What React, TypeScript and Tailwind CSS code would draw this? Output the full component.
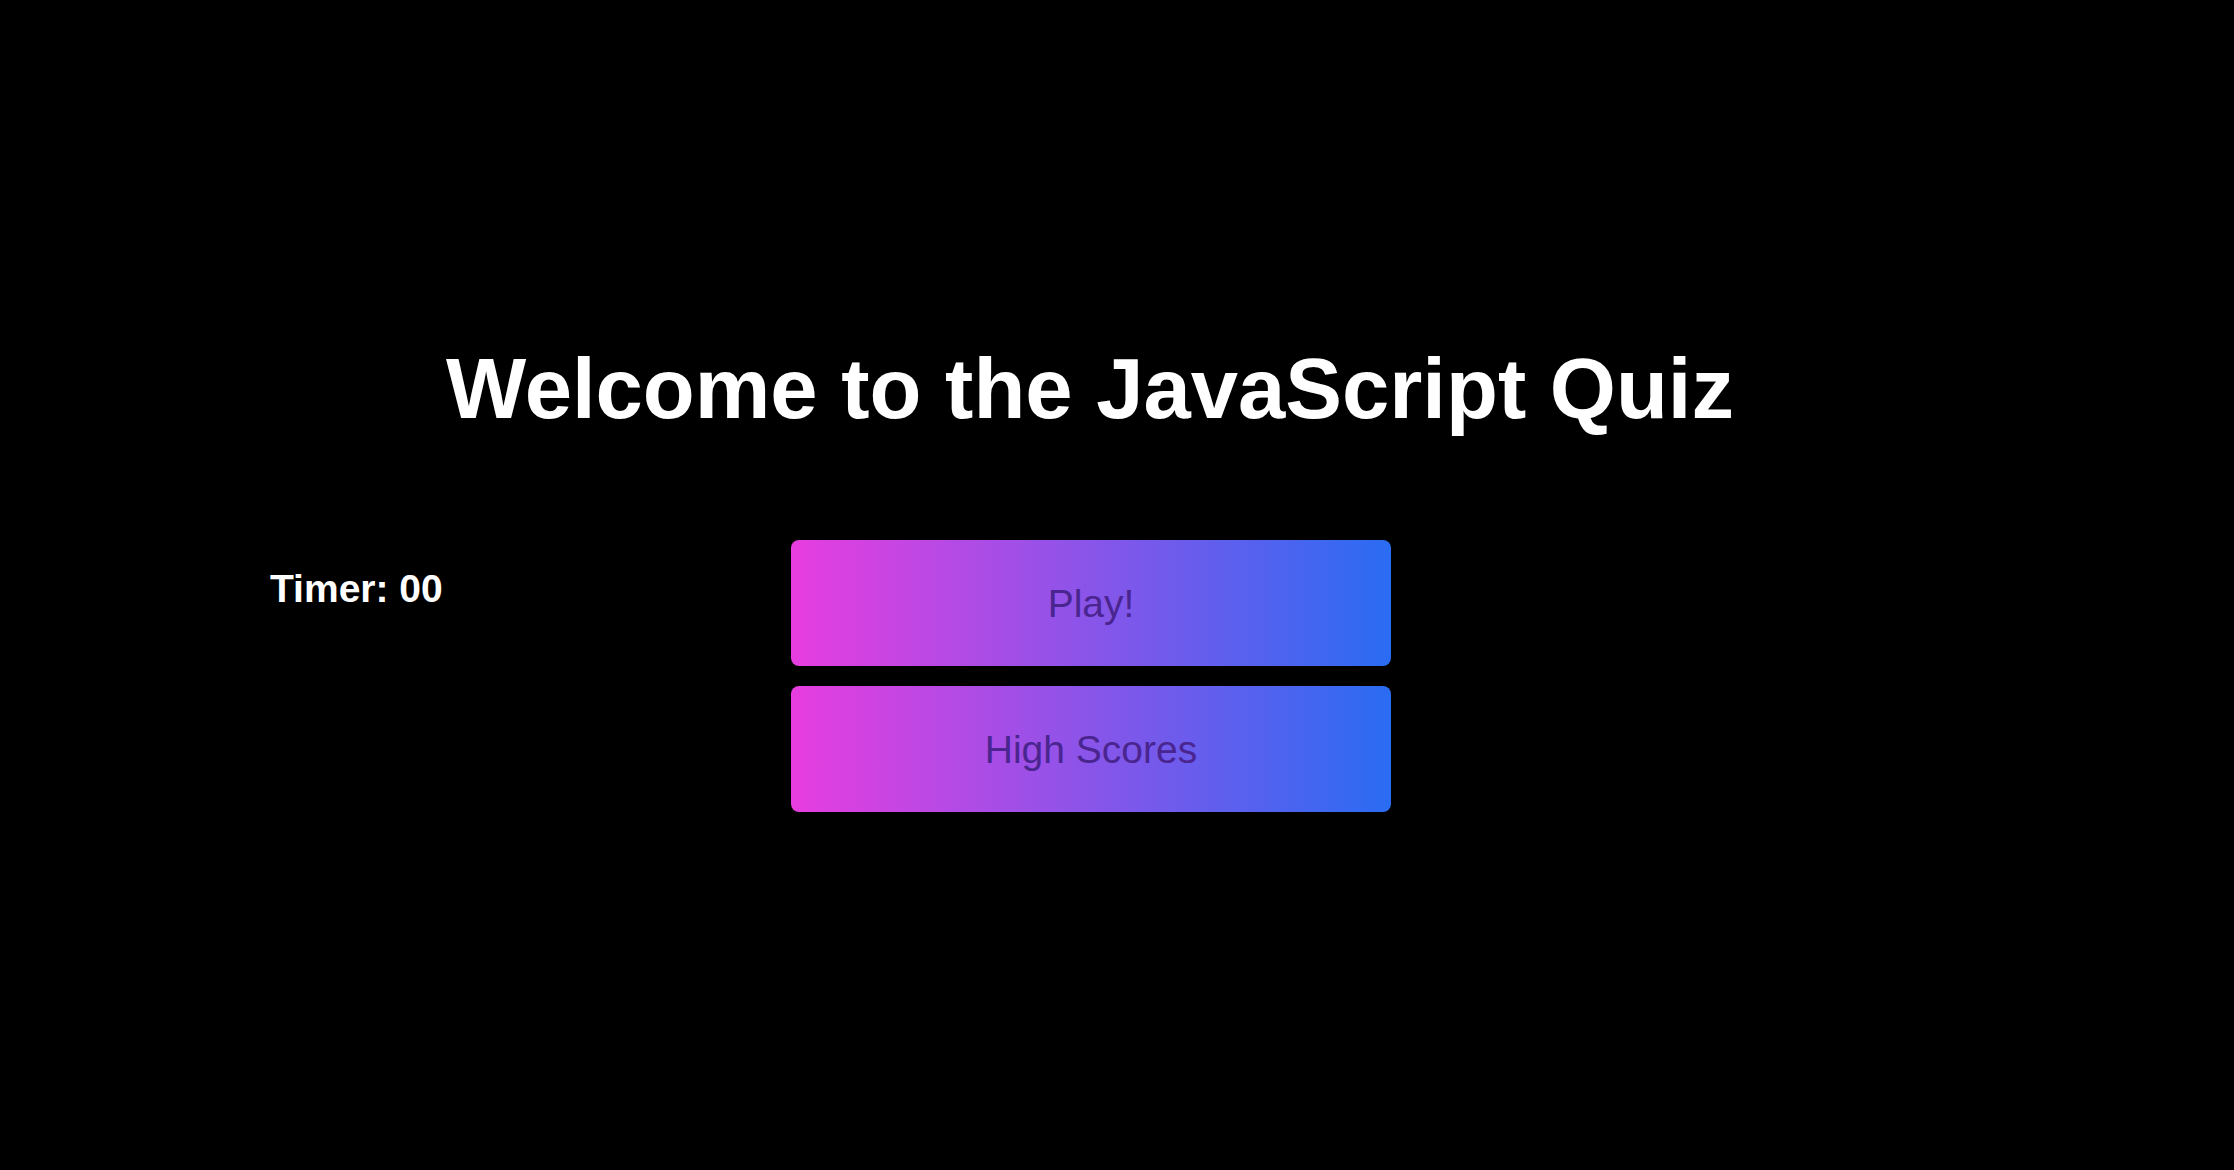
import React from "react";

const buttons = ["Play!", "High Scores"];

export default function App() {
  return (
    <div
      className="min-h-screen w-full bg-black text-white"
      style={{ fontFamily: '"Liberation Sans", Arial, sans-serif' }}
    >
      <div className="pr-[54px] pt-[346px]">
        <h1 className="text-center text-[85px] font-bold leading-none">
          Welcome to the JavaScript Quiz
        </h1>
      </div>

      <div className="flex pl-[270px] pt-[109px]">
        <div className="w-[521px] shrink-0 pt-[29px] text-[39px] font-bold leading-none">
          Timer: 00
        </div>
        <div className="flex w-[600px] flex-col gap-5">
          {buttons.map((label) => (
            <button
              key={label}
              className="flex h-[126px] w-full items-center justify-center rounded-lg bg-linear-to-r/srgb from-[#e83ddf] to-[#2a6cf3] text-[39px] leading-none text-[#4a2590]"
            >
              {label}
            </button>
          ))}
        </div>
      </div>
    </div>
  );
}
